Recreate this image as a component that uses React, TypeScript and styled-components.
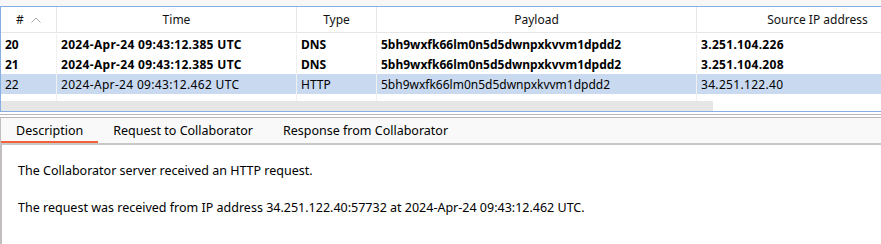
import React from "react";
import styled, { createGlobalStyle } from "styled-components";

const GlobalStyle = createGlobalStyle`
  html, body {
    margin: 0;
    padding: 0;
    background: #ffffff;
  }
  body {
    font-family: "Noto Sans", "Open Sans", sans-serif;
    color: #000000;
  }
`;

interface Interaction {
  id: number;
  time: string;
  type: string;
  payload: string;
  source: string;
  unread: boolean;
}

const interactions: Interaction[] = [
  {
    id: 20,
    time: "2024-Apr-24 09:43:12.385 UTC",
    type: "DNS",
    payload: "5bh9wxfk66lm0n5d5dwnpxkvvm1dpdd2",
    source: "3.251.104.226",
    unread: true,
  },
  {
    id: 21,
    time: "2024-Apr-24 09:43:12.385 UTC",
    type: "DNS",
    payload: "5bh9wxfk66lm0n5d5dwnpxkvvm1dpdd2",
    source: "3.251.104.208",
    unread: true,
  },
  {
    id: 22,
    time: "2024-Apr-24 09:43:12.462 UTC",
    type: "HTTP",
    payload: "5bh9wxfk66lm0n5d5dwnpxkvvm1dpdd2",
    source: "34.251.122.40",
    unread: false,
  },
];

const columns = "56px 240px 80px 320px 242px";

function App(): React.JSX.Element {
  const selectedId = 22;

  return (
    <>
      <GlobalStyle />
      <Window>
        <TopStrip />
        <TablePanel>
          <HeaderRow>
            <HeaderCell>
              # <SortCaret viewBox="0 0 10 6">
                <path d="M0.5 5.5 L5 1 L9.5 5.5" fill="none" stroke="#a8a8a8" strokeWidth="1" />
              </SortCaret>
            </HeaderCell>
            <HeaderCell>Time</HeaderCell>
            <HeaderCell>Type</HeaderCell>
            <HeaderCell>Payload</HeaderCell>
            <HeaderCell>Source IP address</HeaderCell>
          </HeaderRow>
          <Body>
            {interactions.map((row) => (
              <Row key={row.id} selected={row.id === selectedId} bold={row.unread}>
                <Cell>{row.id}</Cell>
                <Cell numeric>{row.time}</Cell>
                <Cell>{row.type}</Cell>
                <Cell>{row.payload}</Cell>
                <Cell numeric>{row.source}</Cell>
              </Row>
            ))}
            <FillerRow>
              <Cell />
              <Cell />
              <Cell />
              <Cell />
              <Cell />
            </FillerRow>
          </Body>
          <ScrollTrack>
            <ScrollThumb />
          </ScrollTrack>
        </TablePanel>
        <Divider />
        <DetailPanel>
          <TabBar>
            <Tab active>Description</Tab>
            <Tab>Request to Collaborator</Tab>
            <Tab>Response from Collaborator</Tab>
          </TabBar>
          <Content>
            <p>The Collaborator server received an HTTP request.</p>
            <p>
              The request was received from IP address 34.251.122.40:57732 at
              2024-Apr-24 09:43:12.462 UTC.
            </p>
          </Content>
        </DetailPanel>
      </Window>
    </>
  );
}

const Window = styled.div`
  width: 881px;
  height: 244px;
  display: flex;
  flex-direction: column;
  overflow: hidden;
  background: #ffffff;
`;

const TopStrip = styled.div`
  height: 6px;
  background: #f7f7f7;
  flex-shrink: 0;
`;

const TablePanel = styled.div`
  height: 104px;
  flex-shrink: 0;
  display: flex;
  flex-direction: column;
  border-top: 1px solid #86aee0;
  border-left: 1px solid #86aee0;
  border-bottom: 1px solid #86aee0;
  overflow: hidden;
`;

const HeaderRow = styled.div`
  display: grid;
  grid-template-columns: ${columns};
  height: 25px;
  border-bottom: 1px solid #e6e6e6;
  font-size: 12px;
  flex-shrink: 0;
`;

const HeaderCell = styled.div`
  display: flex;
  align-items: center;
  justify-content: center;
  gap: 6px;
  border-right: 1px solid #e6e6e6;
  white-space: nowrap;
  color: #111111;
`;

const SortCaret = styled.svg`
  width: 10px;
  height: 6px;
  margin-left: 1px;
`;

const Body = styled.div`
  flex: 1;
  display: flex;
  flex-direction: column;
  margin-top: 1px;
`;

const Row = styled.div<{ selected?: boolean; bold?: boolean }>`
  display: grid;
  grid-template-columns: ${columns};
  height: 20px;
  flex-shrink: 0;
  font-size: 12px;
  font-weight: ${(p) => (p.bold ? 700 : 400)};
  background: ${(p) => (p.selected ? "#c9daf0" : "transparent")};
`;

const FillerRow = styled(Row)`
  flex: 1;
  height: auto;
`;

const Cell = styled.div<{ numeric?: boolean }>`
  display: flex;
  align-items: center;
  padding-left: 4px;
  border-right: 1px solid #f0f0f0;
  white-space: nowrap;
  overflow: hidden;
  letter-spacing: ${(p) => (p.numeric ? "0.32px" : "normal")};
`;

const ScrollTrack = styled.div`
  height: 10px;
  flex-shrink: 0;
  background: #ffffff;
`;

const ScrollThumb = styled.div`
  width: 712px;
  height: 100%;
  background: #e6e6e6;
`;

const Divider = styled.div`
  height: 2px;
  margin-top: 2px;
  border-top: 1px solid #bcb6b8;
  border-bottom: 1px solid #bcb6b8;
  flex-shrink: 0;
`;

const DetailPanel = styled.div`
  flex: 1;
  display: flex;
  flex-direction: column;
  border-left: 2px solid #c2bec0;
`;

const TabBar = styled.div`
  display: flex;
  height: 25px;
  background: #f9f9f9;
  border-bottom: 2px solid #c8c8c8;
  flex-shrink: 0;
  margin-left: -1px;
`;

const Tab = styled.div<{ active?: boolean }>`
  display: flex;
  align-items: center;
  padding: 0 15px;
  font-size: 12.5px;
  color: #000000;
  box-shadow: ${(p) => (p.active ? "inset 0 -2px 0 #f2613a" : "none")};
  white-space: nowrap;
`;

const Content = styled.div`
  flex: 1;
  padding: 18px 16px 0;
  font-size: 12.5px;

  p {
    margin: 0 0 21px;
    line-height: 16px;
  }
`;

export default App;
